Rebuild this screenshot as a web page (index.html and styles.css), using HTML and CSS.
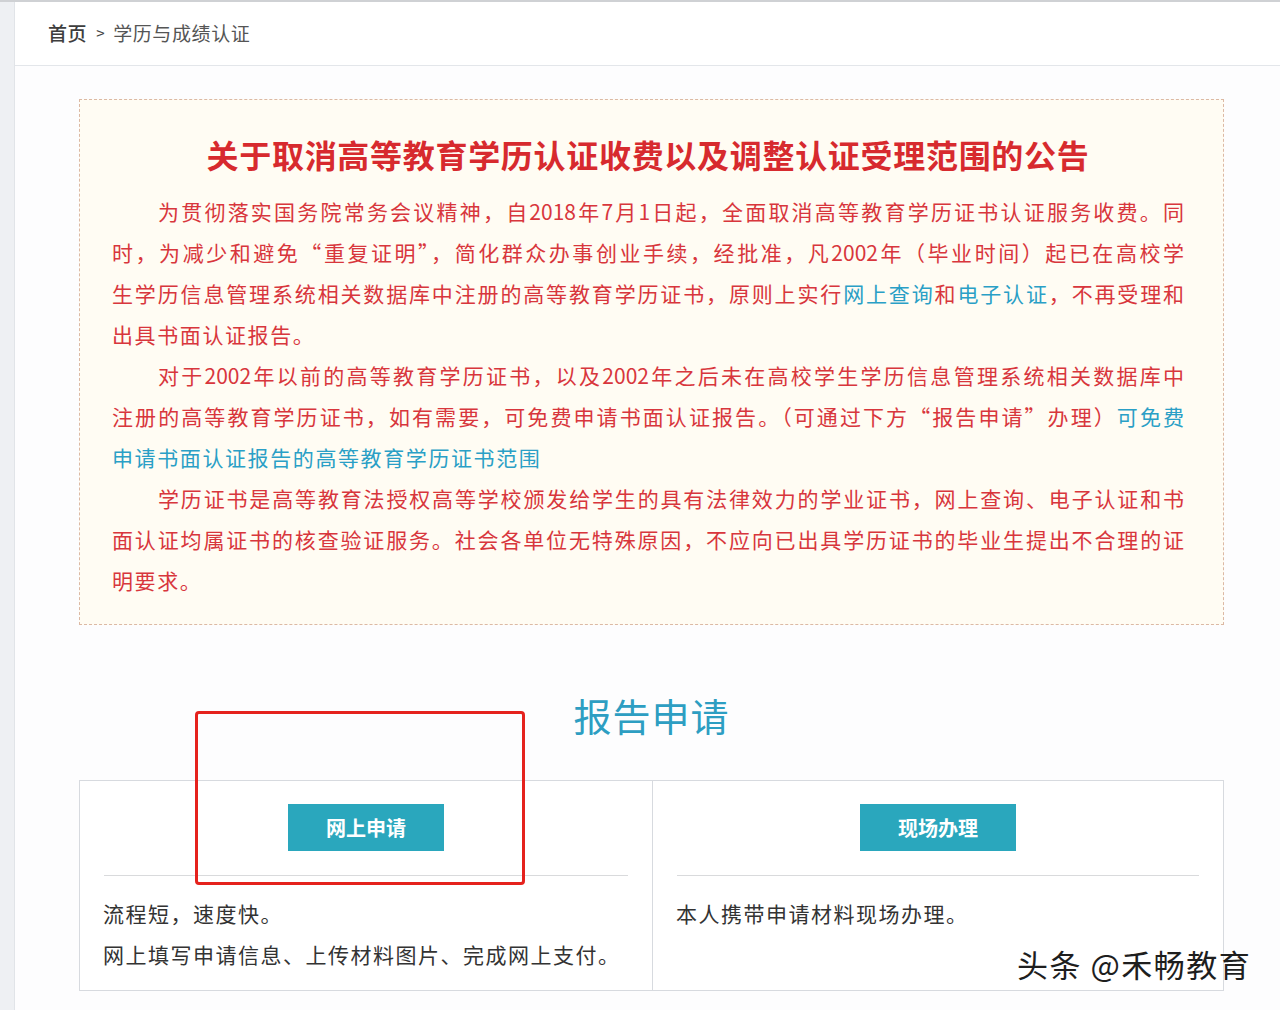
FILE: index.html
```html
<!DOCTYPE html>
<html lang="zh-CN">
<head>
<meta charset="utf-8">
<title>学历与成绩认证</title>
<link rel="stylesheet" href="styles.css">
</head>
<body>
<div class="page">
  <aside class="strip"></aside>
  <main class="main">
    <nav class="crumb"><span class="home">首页</span><span class="sep">&gt;</span><span>学历与成绩认证</span></nav>
    <div class="content">
      <section class="notice">
        <h1 class="title">关于取消高等教育学历认证收费以及调整认证受理范围的公告</h1>
        <p class="para">
          <span class="ln first">为贯彻落实国务院常务会议精神，自2018年7月1日起，全面取消高等教育学历证书认证服务收费。同</span>
          <span class="ln">时，为减少和避免“重复证明”，简化群众办事创业手续，经批准，凡2002年（毕业时间）起已在高校学</span>
          <span class="ln">生学历信息管理系统相关数据库中注册的高等教育学历证书，原则上实行<a class="link">网上查询</a>和<a class="link">电子认证</a>，不再受理和</span>
          <span class="end">出具书面认证报告。</span>
        </p>
        <p class="para">
          <span class="ln first">对于2002年以前的高等教育学历证书，以及2002年之后未在高校学生学历信息管理系统相关数据库中</span>
          <span class="ln">注册的高等教育学历证书，如有需要，可免费申请书面认证报告。（可通过下方“报告申请”办理）<a class="link">可免费</a></span>
          <span class="end"><a class="link">申请书面认证报告的高等教育学历证书范围</a></span>
        </p>
        <p class="para">
          <span class="ln first">学历证书是高等教育法授权高等学校颁发给学生的具有法律效力的学业证书，网上查询、电子认证和书</span>
          <span class="ln">面认证均属证书的核查验证服务。社会各单位无特殊原因，不应向已出具学历证书的毕业生提出不合理的证</span>
          <span class="end">明要求。</span>
        </p>
      </section>

      <h2 class="heading">报告申请</h2>

      <div class="cards">
        <div class="card">
          <div class="btn-row"><a class="btn">网上申请</a></div>
          <hr class="rule">
          <p class="desc">流程短，速度快。</p>
          <p class="desc">网上填写申请信息、上传材料图片、完成网上支付。</p>
        </div>
        <div class="card">
          <div class="btn-row"><a class="btn">现场办理</a></div>
          <hr class="rule">
          <p class="desc">本人携带申请材料现场办理。</p>
        </div>
      </div>
    </div>
  </main>
</div>
<div class="mark"></div>
<div class="watermark">头条 @禾畅教育</div>
</body>
</html>
```
FILE: styles.css
```css
html, body {
  margin: 0;
  padding: 0;
  background: #ffffff;
  font-family: "Noto Sans CJK SC", "Noto Sans", sans-serif;
}

.page {
  display: flex;
  min-height: 1010px;
  border-top: 2px solid #cfd1d4;
  box-sizing: border-box;
}

.strip {
  width: 14px;
  flex: none;
  background: #eef0f3;
  border-right: 1px solid #e1e4e8;
}

.main {
  flex: 1;
  background: #fdfdfe;
}

.crumb {
  height: 64px;
  box-sizing: border-box;
  padding: 0 0 3px 33px;
  display: flex;
  align-items: center;
  font-size: 19px;
  letter-spacing: 0.6px;
  color: #555;
  border-bottom: 1px solid #e3e6ea;
  background: #fff;
}

.crumb .home {
  color: #3d3d3d;
  font-weight: 500;
}

.crumb .sep {
  margin: 0 8px 0 9px;
  font-size: 15px;
  color: #444;
}

.content {
  padding: 33px 56px 0 64px;
}

.notice {
  background: #fffcf3;
  border: 1px dashed #dcb9a4;
  padding: 32px 39px 23px 32px;
}

.title {
  margin: 0 0 15px;
  text-align: center;
  font-size: 32px;
  line-height: 44px;
  font-weight: 700;
  color: #d72a2e;
  letter-spacing: 0.7px;
}

.para {
  margin: 0;
  font-size: 21px;
  line-height: 41px;
  color: #d8363c;
}

.ln {
  display: block;
  text-align: justify;
  text-align-last: justify;
}

.end {
  display: block;
  text-align: left;
  letter-spacing: 1.6px;
}

.first {
  padding-left: 46px;
}

.link {
  color: #2a9fc6;
}

.heading {
  margin: 65px 0 40px;
  text-align: center;
  font-size: 38px;
  line-height: 50px;
  font-weight: 400;
  color: #2d9ec2;
  letter-spacing: 1px;
}

.cards {
  display: grid;
  grid-template-columns: 572px 1fr;
  border: 1px solid #d7dadf;
  background: #fff;
}

.card {
  padding: 23px 24px 15px;
}

.card + .card {
  border-left: 1px solid #d7dadf;
}

.btn-row {
  display: flex;
  justify-content: center;
}

.btn {
  display: flex;
  align-items: center;
  justify-content: center;
  width: 156px;
  height: 47px;
  background: #2aa7bd;
  color: #fff;
  font-size: 20px;
  font-weight: 700;
}

.rule {
  margin: 24px 0 0;
  border: 0;
  border-top: 1px solid #d9dadc;
  height: 0;
}

.rule + .desc {
  margin-top: 17px;
}

.desc {
  margin: 0 0 0 -1px;
  font-size: 21px;
  line-height: 41px;
  letter-spacing: 1.5px;
  color: #333;
}

.mark {
  position: absolute;
  left: 195px;
  top: 711px;
  width: 324px;
  height: 168px;
  border: 3px solid #e5221d;
  border-radius: 4px;
}

.watermark {
  position: absolute;
  left: 1017px;
  top: 942px;
  font-size: 31px;
  line-height: 44px;
  letter-spacing: 1.5px;
  color: #1e1e1e;
  text-shadow: 0 0 2px #fff, 0 0 2px #fff;
}
```
